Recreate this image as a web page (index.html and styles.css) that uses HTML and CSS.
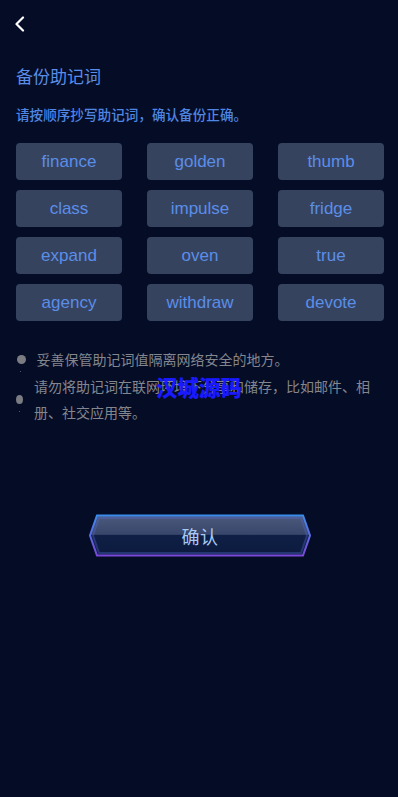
FILE: index.html
```html
<!DOCTYPE html>
<html lang="zh">
<head>
<meta charset="utf-8">
<title>备份助记词</title>
<link rel="stylesheet" href="styles.css">
</head>
<body>
<div class="page">
  <header class="header">
    <svg class="back" width="12" height="16" viewBox="0 0 12 16"><path d="M9 1.5 L2.5 8 L9 14.5" fill="none" stroke="#ffffff" stroke-width="2.2" stroke-linecap="round" stroke-linejoin="round"/></svg>
  </header>
  <h1 class="title">备份助记词</h1>
  <p class="subtitle">请按顺序抄写助记词，确认备份正确。</p>
  <div class="grid">
    <div class="word">finance</div>
    <div class="word">golden</div>
    <div class="word">thumb</div>
    <div class="word">class</div>
    <div class="word">impulse</div>
    <div class="word">fridge</div>
    <div class="word">expand</div>
    <div class="word">oven</div>
    <div class="word">true</div>
    <div class="word">agency</div>
    <div class="word">withdraw</div>
    <div class="word">devote</div>
  </div>
  <ul class="notes">
    <li class="note"><span class="dot"></span><span class="note-text">妥善保管助记词值隔离网络安全的地方。</span></li>
    <li class="note note-2"><span class="dot dot-narrow"></span><span class="note-text">请勿将助记词在联网环境下分享和储存，比如邮件、相册、社交应用等。</span></li>
  </ul>
  <div class="btn-wrap">
    <div class="btn">
      <svg class="btn-bg" width="222" height="44" viewBox="0 0 222 44">
        <defs>
          <linearGradient id="stroke" x1="0" y1="0" x2="0" y2="1">
            <stop offset="0" stop-color="#3a8cec"/>
            <stop offset="1" stop-color="#7a48d8"/>
          </linearGradient>
          <linearGradient id="fill" x1="0" y1="0" x2="0" y2="1">
            <stop offset="0" stop-color="#4b5a7c"/>
            <stop offset="0.47" stop-color="#37466a"/>
            <stop offset="0.5" stop-color="#0f1f45"/>
            <stop offset="1" stop-color="#0c1a3e"/>
          </linearGradient>
        </defs>
        <polygon points="8,1.5 214,1.5 221,21.5 214,41.5 8,41.5 1,21.5" fill="url(#fill)" stroke="url(#stroke)" stroke-width="2"/>
        <polygon points="10,4 212,4 218,21.5 212,39 10,39 4,21.5" fill="none" stroke="#5a6ad8" stroke-opacity="0.35" stroke-width="2"/>
      </svg>
      <span class="btn-text">确认</span>
    </div>
  </div>
  <div class="watermark">汉城源码</div>
</div>
</body>
</html>
```
FILE: styles.css
```css
* { box-sizing: border-box; }
html, body {
  margin: 0;
  padding: 0;
  background: #050d26;
}
body {
  font-family: "Noto Sans CJK SC", "Liberation Sans", sans-serif;
}
.page {
  position: relative;
  width: 398px;
  min-height: 797px;
  padding: 0 16px;
  background: #050d26;
}
.header {
  height: 48px;
  display: flex;
  align-items: center;
}
.back {
  display: block;
  margin-left: -2px;
}
.title {
  margin: 16px 0 0;
  font-size: 17px;
  line-height: 24px;
  font-weight: 400;
  color: #5b8de8;
}
.subtitle {
  margin: 16px 0 0;
  font-size: 13.6px;
  line-height: 20px;
  font-weight: 500;
  color: #4f86e2;
}
.grid {
  margin-top: 19px;
  display: grid;
  grid-template-columns: repeat(3, 106px);
  column-gap: 25px;
  row-gap: 10px;
}
.word {
  height: 37px;
  border-radius: 4px;
  background: #36435f;
  color: #5b8ee8;
  font-family: "Liberation Sans", Arial, sans-serif;
  font-size: 17px;
  display: flex;
  align-items: center;
  justify-content: center;
}
.notes {
  list-style: none;
  margin: 25px 0 0;
  padding: 0;
}
.note {
  display: flex;
  align-items: center;
  color: #84868e;
  font-size: 14px;
  line-height: 26px;
}
.note-2 {
  margin-top: 1px;
}
.dot {
  position: relative;
  flex: none;
  width: 9px;
  height: 9px;
  border-radius: 50%;
  background: #7a7c82;
  margin: 0 11px 0 0.5px;
}
.dot::after {
  content: "";
  position: absolute;
  left: 3px;
  top: 16px;
  width: 1px;
  height: 1px;
  background: #55575e;
}
.dot-narrow {
  width: 7px;
  height: 9px;
  margin: 0 11px 0 0;
}
.note-text {
  flex: 1;
}
.btn-wrap {
  margin-top: 89px;
  display: flex;
  justify-content: center;
  padding-left: 2px;
}
.btn {
  position: relative;
  width: 222px;
  height: 44px;
  display: flex;
  align-items: center;
  justify-content: center;
}
.btn-bg {
  position: absolute;
  left: 0;
  top: 0;
}
.btn-text {
  position: relative;
  font-size: 18px;
  color: #a9c9f2;
  letter-spacing: 0.5px;
}
.watermark {
  position: absolute;
  left: 156px;
  top: 372px;
  font-size: 21.5px;
  line-height: 30px;
  font-weight: 900;
  color: #1a1aff;
  letter-spacing: 0;
}
```
